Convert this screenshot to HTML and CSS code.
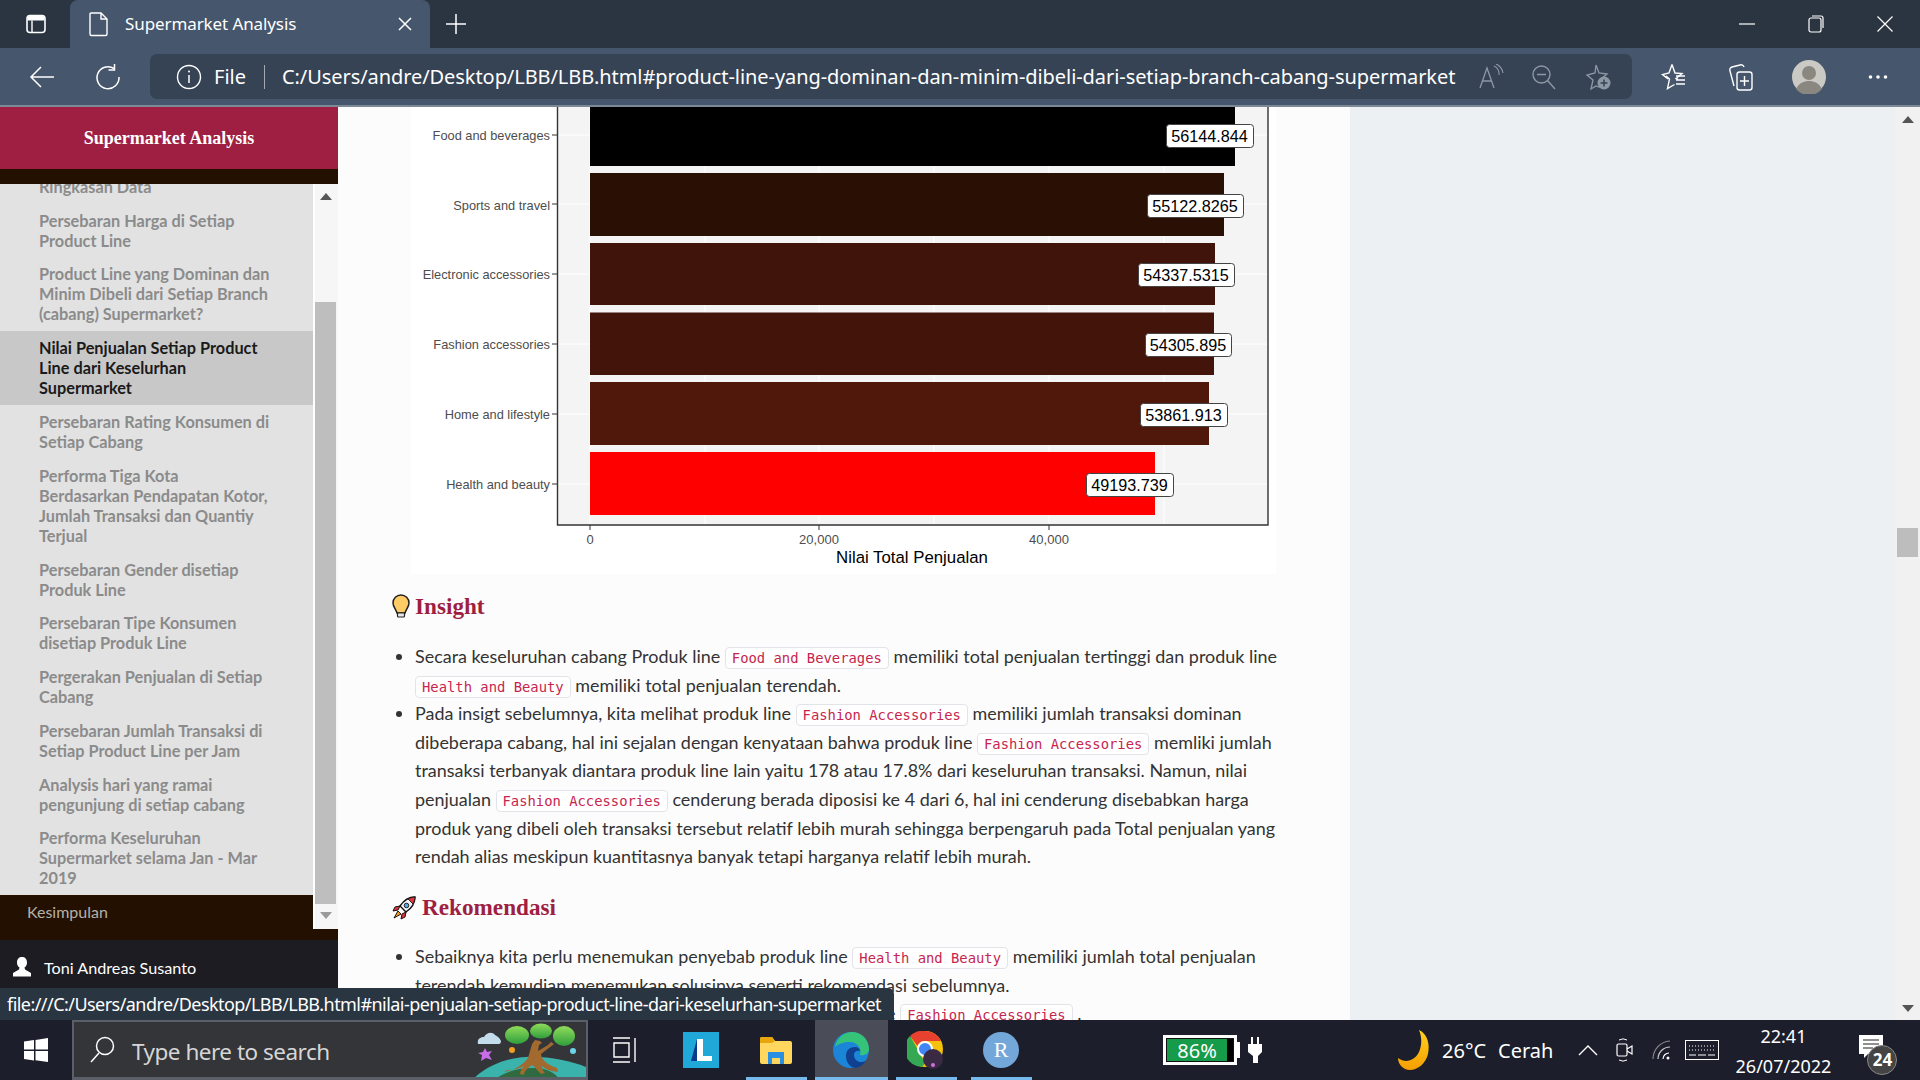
FILE: index.html
```html
<!DOCTYPE html>
<html lang="id">
<head>
<meta charset="utf-8">
<title>Supermarket Analysis</title>
<link rel="stylesheet" href="styles.css">
</head>
<body>
<div class="screen">
  <header class="tabbar">
    <svg class="ico tabs-ico" width="24" height="24" viewBox="0 0 24 24"><rect x="3" y="3.5" width="18" height="17" rx="3" fill="none" stroke="#fff" stroke-width="1.6"/><path d="M3.5 8.5h17V6a2 2 0 0 0-2-2h-13a2 2 0 0 0-2 2z" fill="#fff"/><path d="M8 8.5v11.5" stroke="#fff" stroke-width="1.4"/></svg>
    <div class="tab">
      <svg width="22" height="26" viewBox="0 0 22 26"><path d="M3 2h10l6 6v15a1.500 1.500 0 0 1-1.500 1.500h-14A1.500 1.500 0 0 1 2 23V3a1 1 0 0 1 1-1zM13 2v6h6" fill="none" stroke="#fff" stroke-width="1.400"/></svg>
      <span class="tab-title">Supermarket Analysis</span>
      <svg class="tab-x" width="14" height="14" viewBox="0 0 14 14"><path d="M1 1l12 12M13 1L1 13" stroke="#fff" stroke-width="1.500"/></svg>
    </div>
    <svg class="ico plus" width="22" height="22" viewBox="0 0 22 22"><path d="M11 1v20M1 11h20" stroke="#fff" stroke-width="1.500"/></svg>
    <div class="winbtns">
      <svg width="16" height="16" viewBox="0 0 16 16"><path d="M0 8h16" stroke="#fff" stroke-width="1.200"/></svg>
      <svg width="16" height="18" viewBox="0 0 16 18"><rect x="1" y="3" width="12" height="14" rx="2" fill="none" stroke="#fff" stroke-width="1.200"/><path d="M4 1h9a2 2 0 0 1 2 2v10" fill="none" stroke="#fff" stroke-width="1.200"/></svg>
      <svg width="16" height="16" viewBox="0 0 16 16"><path d="M0.500 0.500l15 15M15.500 0.500l-15 15" stroke="#fff" stroke-width="1.200"/></svg>
    </div>
  </header>

  <nav class="toolbar">
    <svg class="ico back" width="26" height="24" viewBox="0 0 26 24"><path d="M25 12H2M12 2L2 12l10 10" fill="none" stroke="#fff" stroke-width="1.500"/></svg>
    <svg class="ico reload" width="26" height="26" viewBox="0 0 26 26"><path d="M19 4.500A11 11 0 1 0 24 13" fill="none" stroke="#fff" stroke-width="1.500"/><path d="M19.500 0v6h-6" fill="none" stroke="#fff" stroke-width="1.500"/></svg>
    <div class="address">
      <svg width="26" height="26" viewBox="0 0 26 26"><circle cx="13" cy="13" r="11.500" fill="none" stroke="#fff" stroke-width="1.400"/><path d="M13 11v8" stroke="#fff" stroke-width="1.500"/><circle cx="13" cy="7.500" r="1" fill="#fff"/></svg>
      <span class="file">File</span>
      <span class="divider"></span>
      <span class="url">C:/Users/andre/Desktop/LBB/LBB.html#product-line-yang-dominan-dan-minim-dibeli-dari-setiap-branch-cabang-supermarket</span>
      <div class="addr-icons">
        <svg width="26" height="26" viewBox="0 0 26 26"><path d="M2 24L9 4l7 20M4.500 17h9" fill="none" stroke="#8d98a5" stroke-width="1.300"/><path d="M16 2a9 9 0 0 1 5 9M18 0a12 12 0 0 1 7 9" fill="none" stroke="#8d98a5" stroke-width="1.100"/></svg>
        <svg width="26" height="26" viewBox="0 0 26 26"><circle cx="10.500" cy="10.500" r="8.500" fill="none" stroke="#8d98a5" stroke-width="1.400"/><path d="M6 10.500h9M16.500 16.500L24 25" stroke="#8d98a5" stroke-width="1.400"/></svg>
        <svg width="28" height="28" viewBox="0 0 28 28"><path d="M12 2l3 8 8 1-6 5 2 6-4 2-3-1-5 3 2-9-6-5 8-2z" fill="none" stroke="#8d98a5" stroke-width="1.300"/><circle cx="20" cy="20" r="6.500" fill="#8d98a5"/><path d="M20 16.500v7M16.500 20h7" stroke="#364354" stroke-width="1.500"/></svg>
      </div>
    </div>
    <div class="tool-icons">
      <svg width="26" height="28" viewBox="0 0 26 28"><path d="M11 1.500l3 8.500 7 .5-6 5 2 1M5 13l3.500 3-2 9.500 7-4M11 1.500L8 10l-6.500 1.500L7 16" fill="none" stroke="#fff" stroke-width="1.400"/><path d="M15 13h9M15 17h9M15 21h9" stroke="#fff" stroke-width="1.400"/></svg>
      <svg width="26" height="30" viewBox="0 0 26 30"><rect x="9" y="10" width="15" height="18" rx="2.500" fill="none" stroke="#fff" stroke-width="1.400"/><path d="M16.500 14v10M12 19h9" stroke="#fff" stroke-width="1.400"/><path d="M6 24L2 9a3 3 0 0 1 2-4l8-2a3 3 0 0 1 4 2" fill="none" stroke="#fff" stroke-width="1.400"/></svg>
      <svg class="avatar" width="34" height="34" viewBox="0 0 34 34"><circle cx="17" cy="17" r="17" fill="#cbc9c4"/><circle cx="17" cy="13" r="7" fill="#8a8680"/><path d="M4 29c3-6 8-8 13-8s10 2 13 8a17 17 0 0 1-26 0z" fill="#8a8680"/></svg>
      <svg width="20" height="6" viewBox="0 0 20 6"><circle cx="2.500" cy="3" r="1.800" fill="#fff"/><circle cx="10" cy="3" r="1.800" fill="#fff"/><circle cx="17.500" cy="3" r="1.800" fill="#fff"/></svg>
    </div>
  </nav>

  <div class="viewport">
    <aside class="sidebar">
      <div class="brand">Supermarket Analysis</div>
      <div class="toc-shell">
        <div class="toc-col">
          <div class="toc-scroll">
            <ul class="toc">
              <li>Ringkasan Data</li>
              <li>Persebaran Harga di Setiap Product Line</li>
              <li>Product Line yang Dominan dan Minim Dibeli dari Setiap Branch (cabang) Supermarket?</li>
              <li class="active">Nilai Penjualan Setiap Product Line dari Keselurhan Supermarket</li>
              <li>Persebaran Rating Konsumen di Setiap Cabang</li>
              <li>Performa Tiga Kota Berdasarkan Pendapatan Kotor, Jumlah Transaksi dan Quantiy Terjual</li>
              <li>Persebaran Gender disetiap Produk Line</li>
              <li>Persebaran Tipe Konsumen disetiap Produk Line</li>
              <li>Pergerakan Penjualan di Setiap Cabang</li>
              <li>Persebaran Jumlah Transaksi di Setiap Product Line per Jam</li>
              <li>Analysis hari yang ramai pengunjung di setiap cabang</li>
              <li>Performa Keseluruhan Supermarket selama Jan - Mar 2019</li>
            </ul>
          </div>
          <div class="toc-top">Kesimpulan</div>
        </div>
        <div class="side-scroll">
          <span class="arrow up"></span>
          <span class="side-thumb"></span>
          <span class="arrow down"></span>
        </div>
      </div>
      <div class="side-foot">
        <div class="foot-row">
          <svg width="18" height="20" viewBox="0 0 18 20"><path d="M9 0c3 0 5 2 5 5.500 0 2.500-1 4-2.500 5l.5 2 6 3.500v3.500H0V16l6-3.500.5-2C5 9.500 4 8 4 5.500 4 2 6 0 9 0z" fill="#fff"/></svg>
          <span>Toni Andreas Susanto</span>
        </div>
        <div class="foot-row">
          <svg width="18" height="20" viewBox="0 0 18 20"><rect x="1" y="3" width="16" height="16" rx="2" fill="#fff"/></svg>
          <span>26 Juli 2022</span>
        </div>
      </div>
    </aside>

    <main class="page">
      <div class="content">
        <svg class="chart" width="865" height="467" viewBox="0 0 865 467">
          <rect class="panel" x="146" y="0" width="711" height="418"/>
          <path class="grid" d="M179 0V418M294 0V418M408 0V418M523 0V418M638 0V418M753 0V418M146 28H857M146 97H857M146 167H857M146 237H857M146 307H857M146 377H857"/>
          <rect x="179" y="-4" width="645" height="63" fill="#000"/>
          <rect x="179" y="66" width="634" height="63" fill="#2a1004"/>
          <rect x="179" y="136" width="625" height="62" fill="#40140a"/>
          <rect x="179" y="205.500" width="624" height="62.500" fill="#42140a"/>
          <rect x="179" y="275" width="619" height="63" fill="#50180b"/>
          <rect x="179" y="345" width="565" height="63" fill="#f00"/>
          <path class="frame" d="M146.500 0V418H857V0"/>
          <path class="tick" d="M141 28h5M141 97h5M141 167h5M141 237h5M141 307h5M141 377h5M179 418v5M408 418v5M638 418v5"/>
          <text class="cat" x="139" y="33">Food and beverages</text>
          <text class="cat" x="139" y="103">Sports and travel</text>
          <text class="cat" x="139" y="172">Electronic accessories</text>
          <text class="cat" x="139" y="242">Fashion accessories</text>
          <text class="cat" x="139" y="312">Home and lifestyle</text>
          <text class="cat" x="139" y="382">Health and beauty</text>
          <text class="val-x" x="179" y="437">0</text>
          <text class="val-x" x="408" y="437">20,000</text>
          <text class="val-x" x="638" y="437">40,000</text>
          <text class="x-title" x="501" y="456">Nilai Total Penjualan</text>
          <rect class="lab" x="755.500" y="17.500" width="87" height="23" rx="3"/>
          <text class="lab-t" x="798.500" y="35">56144.844</text>
          <rect class="lab" x="736.500" y="87.500" width="96" height="23" rx="3"/>
          <text class="lab-t" x="784" y="105">55122.8265</text>
          <rect class="lab" x="727.500" y="156.500" width="96" height="23" rx="3"/>
          <text class="lab-t" x="775" y="174">54337.5315</text>
          <rect class="lab" x="734.500" y="226.500" width="86" height="23" rx="3"/>
          <text class="lab-t" x="777" y="244">54305.895</text>
          <rect class="lab" x="729.500" y="296.500" width="87" height="23" rx="3"/>
          <text class="lab-t" x="772.500" y="314">53861.913</text>
          <rect class="lab" x="675.500" y="366.500" width="87" height="23" rx="3"/>
          <text class="lab-t" x="718.500" y="384">49193.739</text>
        </svg>

        <h3 class="head">
          <svg class="head-ico" width="18" height="24" viewBox="0 0 18 24"><path d="M9 1a8 8 0 0 0-8 8c0 4 3 6 4 10h8c1-4 4-6 4-10a8 8 0 0 0-8-8z" fill="#ffcc66" stroke="#222" stroke-width="1.500"/><path d="M5.500 19h7v3a1 1 0 0 1-1 1h-5a1 1 0 0 1-1-1z" fill="#e8e8e8" stroke="#222" stroke-width="1.200"/></svg>
          Insight
        </h3>
        <ul class="points">
          <li>Secara keseluruhan cabang Produk line <code>Food and Beverages</code> memiliki total penjualan tertinggi dan produk line <code>Health and Beauty</code> memiliki total penjualan terendah.</li>
          <li>Pada insigt sebelumnya, kita melihat produk line <code>Fashion Accessories</code> memiliki jumlah transaksi dominan dibeberapa cabang, hal ini sejalan dengan kenyataan bahwa produk line <code>Fashion Accessories</code> memliki jumlah transaksi terbanyak diantara produk line lain yaitu 178 atau 17.8% dari keseluruhan transaksi. Namun, nilai penjualan <code>Fashion Accessories</code> cenderung berada diposisi ke 4 dari 6, hal ini cenderung disebabkan harga produk yang dibeli oleh transaksi tersebut relatif lebih murah sehingga berpengaruh pada Total penjualan yang rendah alias meskipun kuantitasnya banyak tetapi harganya relatif lebih murah.</li>
        </ul>
        <h3 class="head head-2">
          <svg class="head-ico" width="24" height="24" viewBox="0 0 24 24"><path d="M23 1c-6 0-11 3-15 9l6 6c6-4 9-9 9-15z" fill="#f2f4f6" stroke="#111" stroke-width="1.400"/><path d="M23 1c-3 0-5 1-7 2l5 5c1-2 2-4 2-7z" fill="#e0343c" stroke="#111" stroke-width="0.800"/><circle cx="14.500" cy="9.500" r="2.300" fill="#55a7e0" stroke="#222"/><path d="M8 10l-5 1-2 4 5-1zM14 16l-1 5-4 2 1-5z" fill="#e0343c" stroke="#111" stroke-width="1"/><path d="M6 15l-4 7 7-4z" fill="#f7a51c" stroke="#111" stroke-width="1"/></svg>
          Rekomendasi
        </h3>
        <ul class="points">
          <li>Sebaiknya kita perlu menemukan penyebab produk line <code>Health and Beauty</code> memiliki jumlah total penjualan terendah kemudian menemukan solusinya seperti rekomendasi sebelumnya.</li>
          <li>Selanjutnya, kita juga harus menjaga ketersediaan produk line <code>Fashion Accessories</code> .</li>
        </ul>
      </div>
    </main>

    <div class="page-scroll">
      <span class="arrow up"></span>
      <span class="page-thumb"></span>
      <span class="arrow down"></span>
    </div>

    <div class="status">file:///C:/Users/andre/Desktop/LBB/LBB.html#nilai-penjualan-setiap-product-line-dari-keselurhan-supermarket</div>
  </div>

  <footer class="taskbar">
    <svg class="win" width="24" height="24" viewBox="0 0 24 24"><path d="M0 3.500l10-1.400V11.500H0zM11.500 1.900L24 0v11.500H11.500zM0 13h10v9.500L0 21zM11.500 13H24v11l-12.500-1.800z" fill="#fff"/></svg>
    <div class="search">
      <svg width="26" height="28" viewBox="0 0 26 28"><circle cx="15" cy="10" r="8.500" fill="none" stroke="#fff" stroke-width="1.500"/><path d="M9 17L1 26" stroke="#fff" stroke-width="1.500"/></svg>
      <span class="search-text">Type here to search</span>
      <svg class="search-art" width="120" height="55" viewBox="0 0 120 55">
        <defs><linearGradient id="leaf" x1="0" y1="0" x2="0" y2="1"><stop offset="0" stop-color="#8fdc5a"/><stop offset="1" stop-color="#2f9e3c"/></linearGradient></defs>
        <path d="M12 22c-1-5 2-7 6-7 2-4 8-6 11-2 2 1 5 3 6 6 0 2-1 3-2 3z" fill="#c3dcec"/>
        <path d="M19 26l2 4 5-1-3 4 3 5-6-2-5 3 1-6-4-2 5-1z" fill="#c86ce8"/>
        <circle cx="46" cy="28" r="3" fill="#f0a020"/>
        <circle cx="107" cy="29" r="3" fill="#6cd4ea"/>
        <path d="M6 58C20 44 40 36 60 35c22-1 44 4 60 10v13z" fill="#39b3ac"/>
        <path d="M28 58c10-8 24-12 38-12 12 0 22 3 28 12z" fill="#2f6a40"/>
        <path d="M38 50c10-2 18-6 24-14l4-14 3-4 5 1 2 2-3 2-1 6 10-6 3-3 3 2-13 10c1 6 5 10 16 14l1 4c-9-1-13-3-16-6 0 3 1 5 3 7l-4 1c-3-3-6-7-9-9-4 3-8 6-8 10l-4-1c0-3 2-6 4-8-4 2-10 4-17 4z" fill="#a26a2f"/>
        <ellipse cx="51" cy="13" rx="12" ry="9" fill="url(#leaf)"/>
        <ellipse cx="75" cy="9" rx="11" ry="7.500" fill="url(#leaf)"/>
        <ellipse cx="98" cy="14" rx="11" ry="10" fill="url(#leaf)"/>
      </svg>
    </div>
    <svg class="taskview" width="24" height="26" viewBox="0 0 24 26"><path d="M1 1h17M1 25h17M2 6h15v14H2zM23 1v24" fill="none" stroke="#fff" stroke-width="1.400"/></svg>
    <div class="apps">
      <div class="app"><svg width="36" height="36" viewBox="0 0 36 36"><rect width="36" height="36" fill="#1fa8d8"/><path d="M14 7h6v17h9v5H14z" fill="#fff"/><path d="M14 7v22H8z" fill="#0b3a8c"/></svg></div>
      <div class="app on"><svg width="32" height="32" viewBox="0 0 32 32"><path d="M0 5a2 2 0 0 1 2-2h10l3 4h15a2 2 0 0 1 2 2v19a2 2 0 0 1-2 2H2a2 2 0 0 1-2-2z" fill="#ffd75e"/><path d="M0 5a2 2 0 0 1 2-2h10l3 4-3 2H0z" fill="#e8a60c"/><path d="M8 18h16v12h-4v-6h-8v6H8z" fill="#2a8fe0"/></svg></div>
      <div class="app on active"><svg width="36" height="36" viewBox="0 0 36 36"><circle cx="18" cy="18" r="18" fill="#1b86d8"/><path d="M2 15C4 5 12 0 19 0c9 0 17 7 17 17 0 5-5 7-9 6 2-6-2-13-10-13C10 10 5 12 2 15z" fill="#35c37a"/><path d="M13 24c0-6 4-9 9-9 3 0 5 2 5 4-4-1-6 1-6 4 0 5 5 9 12 6a18 18 0 0 1-10 7c-6 0-10-6-10-12z" fill="#10408f"/></svg></div>
      <div class="app on"><svg width="38" height="38" viewBox="0 0 38 38"><circle cx="18" cy="18" r="18" fill="#f4c20d"/><path d="M18 0a18 18 0 0 1 16 10H18a8 8 0 0 0-7.500 5L3 5A18 18 0 0 1 18 0z" fill="#e8412f"/><path d="M3 5l8 14 7 13-3 4A18 18 0 0 1 3 5z" fill="#34a853"/><circle cx="18" cy="18" r="7" fill="#4285f4" stroke="#fff" stroke-width="2"/><circle cx="26" cy="28" r="10" fill="#3b2a44"/><circle cx="26" cy="34" r="2" fill="#d070e0"/></svg></div>
      <div class="app on"><span class="r-logo">R</span></div>
    </div>
    <div class="battery"><div class="bat-body"><span class="bat-fill">86%</span><span class="bat-end"></span></div><span class="bat-tip"></span></div>
    <svg class="plug" width="14" height="26" viewBox="0 0 14 26"><path d="M3 0h2v7h4V0h2v7h3v8l-4 4v7H5v-7l-5-4V7h3z" fill="#fff"/></svg>
    <div class="tray">
      <svg width="32" height="40" viewBox="0 0 32 40"><defs><linearGradient id="moon" x1="0" y1="0" x2="0" y2="1"><stop offset="0" stop-color="#ffd21f"/><stop offset="1" stop-color="#f59e00"/></linearGradient></defs><path d="M21 0c9 4 11 15 9 24-2 9-10 16-18 16C5 40 0 34 0 28c8 6 17 2 21-6 3-7 3-15 0-22z" fill="url(#moon)"/></svg>
      <span class="weather">26°C</span>
      <span class="weather">Cerah</span>
      <svg class="chev" width="20" height="12" viewBox="0 0 20 12"><path d="M1 11l9-9 9 9" fill="none" stroke="#fff" stroke-width="1.400"/></svg>
      <svg width="18" height="24" viewBox="0 0 18 24"><rect x="1" y="6" width="10" height="12" rx="1.500" fill="none" stroke="#fff" stroke-width="1.200"/><path d="M11 11l5-3v8l-5-3" fill="none" stroke="#fff" stroke-width="1.200"/><path d="M3 2a8 8 0 0 1 8 0M3 22a8 8 0 0 0 8 0" fill="none" stroke="#fff" stroke-width="1"/></svg>
      <svg width="18" height="20" viewBox="0 0 18 20"><path d="M1 19A18 18 0 0 1 18 1" fill="none" stroke="#888" stroke-width="1.200"/><path d="M6 19A12 12 0 0 1 18 7" fill="none" stroke="#ccc" stroke-width="1.200"/><path d="M11 19a6 6 0 0 1 6-6" fill="none" stroke="#fff" stroke-width="1.200"/><circle cx="16" cy="18" r="1.500" fill="#fff"/></svg>
      <svg width="34" height="20" viewBox="0 0 34 20"><rect x="0.500" y="0.500" width="33" height="19" fill="none" stroke="#fff"/><path d="M4 6h26M4 10h26" stroke="#fff" stroke-dasharray="1 2"/><path d="M4 15h7M13 15h8M23 15h7" stroke="#fff"/></svg>
      <div class="clock"><span>22:41</span><span>26/07/2022</span></div>
      <div class="notif">
        <svg width="24" height="24" viewBox="0 0 24 24"><path d="M0 0h24v19H9l-4 4v-4H0z" fill="#fff"/><path d="M4 5h16M4 9h16M4 13h10" stroke="#222" stroke-width="1.200"/></svg>
        <span class="badge">24</span>
      </div>
    </div>
  </footer>
</div>
</body>
</html>
```

FILE: styles.css
```css
* { box-sizing: border-box; }
html, body { margin: 0; padding: 0; }
body { width: 1920px; height: 1080px; overflow: hidden; font-family: "Lato", "Noto Sans", sans-serif; background: #1c1e2b; }
svg { display: block; flex: none; }
.screen { width: 1920px; height: 1080px; display: flex; flex-direction: column; }

/* browser chrome */
.tabbar { height: 48px; background: #2b3542; display: flex; align-items: flex-end; position: relative; }
.tabs-ico { margin: 0 0 12px 24px; }
.tab { width: 360px; height: 48px; margin-left: 22px; background: #46566c; border-radius: 8px 8px 0 0; display: flex; align-items: center; padding-left: 18px; color: #fff; }
.tab-title { margin: 0 0 2px 15px; font: 17px "Noto Sans", sans-serif; letter-spacing: -0.1px; flex: 1; }
.tab-x { margin-right: 18px; }
.plus { margin: 0 0 13px 15px; }
.winbtns { margin-left: auto; height: 48px; display: flex; align-items: center; gap: 53px; padding-right: 27px; }
.toolbar { height: 59px; background: #46566c; border-bottom: 2px solid #7b8997; display: flex; align-items: center; }
.back { margin-left: 29px; }
.reload { margin-left: 40px; }
.address { width: 1482px; height: 45px; margin-left: 29px; background: #364354; border-radius: 7px; display: flex; align-items: center; padding-left: 26px; color: #fff; font: 20px "Noto Sans", sans-serif; }
.file { margin-left: 12px; }
.divider { width: 1px; height: 24px; background: #a0a9b4; margin: 0 17px 0 18px; }
.url { white-space: nowrap; width: 1175px; letter-spacing: -0.07px; }
.addr-icons { display: flex; align-items: center; gap: 27px; margin-left: 21px; }
.tool-icons { display: flex; align-items: center; margin-left: 29px; }
.tool-icons svg:nth-child(2) { margin-left: 41px; }
.avatar { margin-left: 38px; }
.tool-icons svg:nth-child(4) { margin-left: 42px; }

/* viewport */
.viewport { height: 913px; display: flex; position: relative; overflow: hidden; background: #ecf0f3; }
.sidebar { width: 338px; display: flex; flex-direction: column; background: #1c1c22; flex: none; }
.brand { height: 62px; background: #9e1f42; color: #fff; display: flex; align-items: center; justify-content: center; font: bold 18px "Liberation Serif", serif; flex: none; }
.toc-shell { height: 771px; padding-top: 15px; background: #241000; display: flex; align-items: flex-start; flex: none; }
.toc-col { width: 313px; flex: none; }
.toc-scroll { height: 711px; overflow: hidden; background: #e2e2e2; }
.toc { list-style: none; margin: -14px 0 0; padding: 0; }
.toc li { padding: 6.900px 42px 6.900px 39px; font-size: 16.300px; font-weight: 700; line-height: 20px; color: #8b8b8b; }
.toc li.active { background: #c8c8c8; color: #1a1a1a; }
.toc-top { height: 37px; padding-left: 27px; line-height: 34px; font-size: 16px; color: #b5b0aa; }
.side-scroll { width: 25px; height: 745px; background: #f6f6f6; border-left: 2px solid #fff; display: flex; flex-direction: column; align-items: center; padding: 9px 2px 8px 0; }
.side-thumb { width: 21px; height: 602px; margin: 102px 0 8px; background: #bebebe; flex: none; }
.arrow { width: 0; height: 0; border-left: 6px solid transparent; border-right: 6px solid transparent; flex: none; }
.arrow.up { border-bottom: 7px solid #555; }
.arrow.down { border-top: 7px solid #9a9a9a; }
.side-foot { padding: 16px 0 0 13px; color: #fff; font-size: 16.200px; display: flex; flex-direction: column; gap: 9px; }
.foot-row { display: flex; align-items: center; gap: 13px; height: 22px; }

/* page */
.page { width: 1012px; height: 913px; background: #fcfcfc; overflow: hidden; flex: none; }
.content { padding-left: 54px; width: 942px; }
.chart { margin-left: 19px; background: #fff; }
.panel { fill: #f4f4f4; }
.grid { stroke: #fff; stroke-width: 1; fill: none; }
.frame { stroke: #333; stroke-width: 1.400; fill: none; }
.tick { stroke: #333; stroke-width: 1; fill: none; }
.cat, .val-x, .x-title, .lab-t { font-family: "Liberation Sans", sans-serif; }
.cat { font-size: 12.800px; fill: #4d4d4d; text-anchor: end; }
.val-x { font-size: 13px; fill: #4d4d4d; text-anchor: middle; }
.x-title { font-size: 16.800px; fill: #000; text-anchor: middle; }
.lab { fill: #fff; stroke: #444; stroke-width: 1; }
.lab-t { font-size: 16.200px; fill: #000; text-anchor: middle; }
.head { margin: 17px 0 21px; height: 30px; display: flex; align-items: center; gap: 5px; color: #9e1f42; font: bold 23.200px "Liberation Serif", serif; }
.head-2 { margin: 22px 0 19.500px; gap: 6px; }
.head-ico { flex: none; }
.points { margin: 0; padding: 0 0 0 23px; color: #333; font-size: 17.950px; line-height: 28.600px; }
code { font: 13.850px "DejaVu Sans Mono", monospace; color: #c7254e; background: #fff; border: 1px solid #e1e4e8; border-radius: 4px; padding: 2px 6px; }

/* page scrollbar */
.page-scroll { width: 25px; height: 913px; margin-left: auto; background: #f1f1f1; display: flex; flex-direction: column; align-items: center; padding-top: 9px; position: relative; flex: none; }
.page-scroll .arrow.down { border-top-color: #555; margin-top: auto; margin-bottom: 8px; }
.page-thumb { position: absolute; top: 421px; left: 2px; width: 21px; height: 29px; background: #bdbdbd; }
.status { position: absolute; left: 0; bottom: 0; width: 894px; height: 32px; background: #2a3542; color: #fff; border-radius: 0 6px 0 0; padding-left: 7px; font: 18px/33px "Noto Sans", sans-serif; letter-spacing: -0.55px; white-space: nowrap; overflow: hidden; }

/* taskbar */
.taskbar { height: 60px; background: #1c1e2b; display: flex; align-items: center; color: #fff; }
.win { margin-left: 24px; }
.search { width: 516px; height: 60px; margin-left: 24px; background: #333538; border: 2px solid #5a5f68; border-bottom-width: 3px; display: flex; align-items: center; padding-left: 16px; position: relative; overflow: hidden; flex: none; }
.search-text { margin: 3px 0 0 16px; font: 22.500px "Noto Sans", sans-serif; letter-spacing: -0.5px; color: #d6d6d6; }
.search-art { position: absolute; right: 0; bottom: 0; }
.taskview { margin-left: 24px; }
.apps { display: flex; margin-left: 27.500px; height: 60px; }
.app { width: 75px; height: 60px; display: flex; align-items: center; justify-content: center; position: relative; flex: none; }
.app.on::after { content: ""; position: absolute; left: 7px; right: 7px; bottom: 0; height: 3px; background: #76b9ed; }
.app.active { width: 73px; margin: 0 1px; background: #4a4d58; }
.app.active::after { left: 0; right: 0; }
.r-logo { width: 36px; height: 36px; border-radius: 50%; background: #74a7d9; color: #fff; font: 22px/36px "Liberation Serif", serif; text-align: center; }
.battery { display: flex; align-items: center; margin-left: 124.500px; }
.bat-body { width: 74px; height: 30px; border: 3px solid #fff; background: #111; display: flex; padding: 1px; }
.bat-fill { width: 61px; background: #169b4b; color: #fff; font: 20px/24px "Noto Sans", sans-serif; text-align: center; }
.bat-end { width: 6px; background: #000; }
.bat-tip { width: 3px; height: 16px; background: #fff; }
.plug { margin-left: 8px; }
.tray { display: flex; align-items: center; margin-left: 136px; }
.weather { font: 20px "Noto Sans", sans-serif; margin-left: 12px; }
.chev { margin-left: 25px; }
.tray > svg:nth-child(5) { margin-left: 18px; }
.tray > svg:nth-child(6) { margin-left: 18px; }
.tray > svg:nth-child(7) { margin-left: 15px; }
.clock { width: 100px; margin: 2px 0 0 14px; display: flex; flex-direction: column; align-items: center; gap: 7px; font: 18px/23px "Noto Sans", sans-serif; white-space: nowrap; }
.notif { margin-left: 26px; position: relative; width: 24px; height: 24px; margin-top: -6px; }
.badge { position: absolute; left: 8px; top: 10px; width: 30px; height: 30px; border-radius: 50%; background: #444; border: 1px solid #888; font: bold 17px/28px "Noto Sans", sans-serif; text-align: center; color: #fff; }
```
